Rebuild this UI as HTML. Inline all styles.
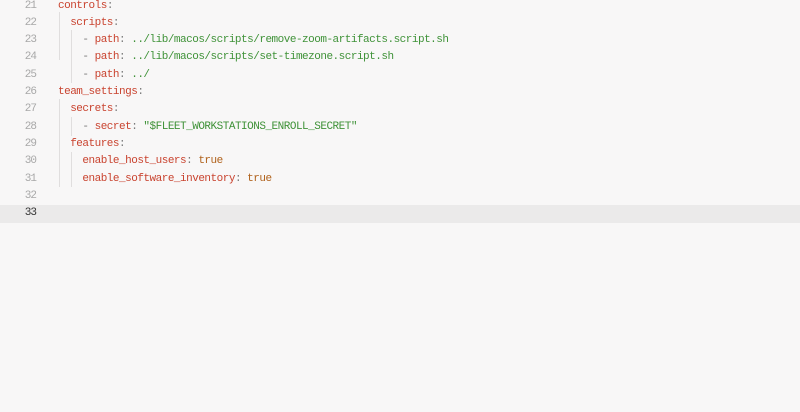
<!DOCTYPE html>
<html><head><style>
html,body{margin:0;padding:0;width:800px;height:412px;overflow:hidden;background:#f8f7f7;}
.ed{position:absolute;left:0;top:-2.5px;width:800px;font-family:"Liberation Mono",monospace;font-size:11px;letter-spacing:-0.5px;}
.l{position:relative;height:17.33px;line-height:17.33px;white-space:pre;}
.n{position:absolute;left:0;width:36px;text-align:right;color:#a8a8a8;letter-spacing:-1px;}
.c{position:absolute;left:58px;color:#7a7a7a;}
.k{color:#c9432f}.s{color:#3f9238}.b{color:#b0621c}
.cur{background:#ebeaea}
.cur .n{color:#333}
.g{position:absolute;width:1px;background:#e0dede;}
</style></head><body>
<div class="ed">
<div class="l"><span class="n">21</span><span class="c"><span class="k">controls</span>:</span></div>
<div class="l"><span class="n">22</span><span class="c">  <span class="k">scripts</span>:</span></div>
<div class="l"><span class="n">23</span><span class="c">    - <span class="k">path</span>: <span class="s">../lib/macos/scripts/remove-zoom-artifacts.script.sh</span></span></div>
<div class="l"><span class="n">24</span><span class="c">    - <span class="k">path</span>: <span class="s">../lib/macos/scripts/set-timezone.script.sh</span></span></div>
<div class="l"><span class="n">25</span><span class="c">    - <span class="k">path</span>: <span class="s">../</span></span></div>
<div class="l"><span class="n">26</span><span class="c"><span class="k">team_settings</span>:</span></div>
<div class="l"><span class="n">27</span><span class="c">  <span class="k">secrets</span>:</span></div>
<div class="l"><span class="n">28</span><span class="c">    - <span class="k">secret</span>: <span class="s">"$FLEET_WORKSTATIONS_ENROLL_SECRET"</span></span></div>
<div class="l"><span class="n">29</span><span class="c">  <span class="k">features</span>:</span></div>
<div class="l"><span class="n">30</span><span class="c">    <span class="k">enable_host_users</span>: <span class="b">true</span></span></div>
<div class="l"><span class="n">31</span><span class="c">    <span class="k">enable_software_inventory</span>: <span class="b">true</span></span></div>
<div class="l"><span class="n">32</span></div>
<div class="l cur"><span class="n">33</span></div>
</div>
<div class="g" style="left:59px;top:12px;height:48px"></div>
<div class="g" style="left:71px;top:30px;height:53px"></div>
<div class="g" style="left:59px;top:99px;height:88px"></div>
<div class="g" style="left:71px;top:117px;height:19px"></div>
<div class="g" style="left:71px;top:152px;height:35px"></div>
</body></html>
